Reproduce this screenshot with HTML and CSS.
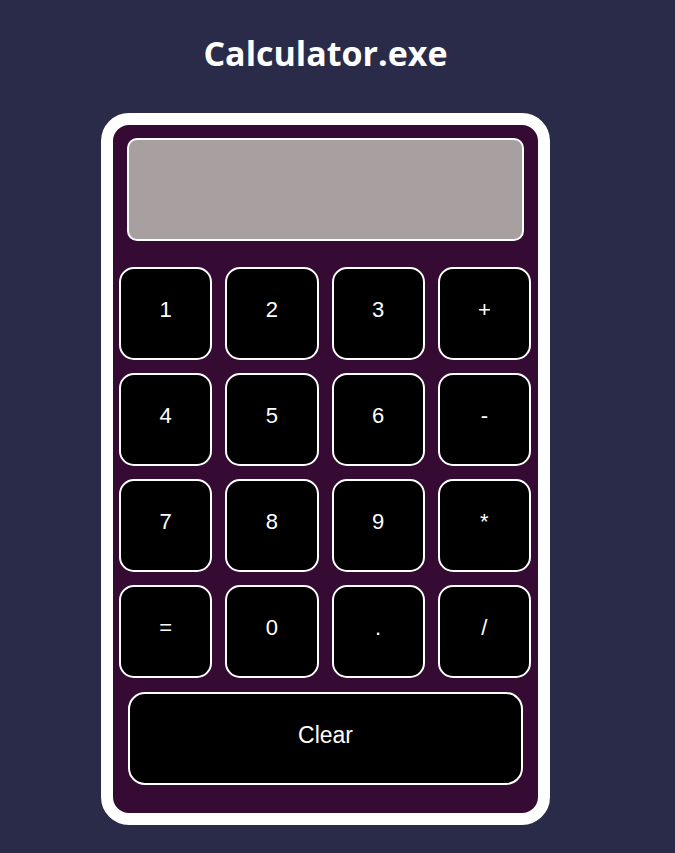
FILE: index.html
```html
<!DOCTYPE html>
<html lang="en">
<head>
<meta charset="utf-8">
<title>Calculator.exe</title>
<link rel="stylesheet" href="styles.css">
</head>
<body>
<div class="page">
  <h1 class="title">Calculator.exe</h1>
  <div class="calc">
    <div class="display"></div>
    <div class="keys">
      <button class="key">1</button>
      <button class="key">2</button>
      <button class="key">3</button>
      <button class="key">+</button>
      <button class="key">4</button>
      <button class="key">5</button>
      <button class="key">6</button>
      <button class="key">-</button>
      <button class="key">7</button>
      <button class="key">8</button>
      <button class="key">9</button>
      <button class="key">*</button>
      <button class="key">=</button>
      <button class="key">0</button>
      <button class="key">.</button>
      <button class="key">/</button>
    </div>
    <button class="key clear">Clear</button>
  </div>
</div>
</body>
</html>
```

FILE: styles.css
```css
html, body {
  margin: 0;
  padding: 0;
  background: #2a2b48;
}

.page {
  width: 651px;
  text-align: center;
}

.title {
  margin: 30px 0 37px;
  font-family: "Open Sans", "Noto Sans", sans-serif;
  font-weight: 700;
  font-size: 34px;
  line-height: 46px;
  color: #ffffff;
}

.calc {
  box-sizing: border-box;
  width: 449px;
  margin: 0 auto;
  border: 12px solid #ffffff;
  border-radius: 28px;
  background: #350a33;
  padding: 13px 0 28px;
  display: flex;
  flex-direction: column;
}

.display {
  box-sizing: border-box;
  width: 397px;
  height: 103px;
  margin-left: 14px;
  border: 2px solid #ffffff;
  border-radius: 10px;
  background: #a8a0a0;
}

.keys {
  width: 412px;
  margin: 26px 0 0 6px;
  display: grid;
  grid-template-columns: repeat(4, 1fr);
  grid-auto-rows: 93px;
  gap: 13px;
}

.key {
  box-sizing: border-box;
  margin: 0;
  padding: 0 0 8px;
  border: 2px solid #ffffff;
  border-radius: 15px;
  background: #000000;
  color: #ffffff;
  font-family: "Liberation Sans", Arial, sans-serif;
  font-size: 22px;
  display: flex;
  align-items: center;
  justify-content: center;
}

.clear {
  width: 395px;
  height: 93px;
  margin: 14px 0 0 15px;
  padding-bottom: 7px;
  border-radius: 17px;
  font-size: 23px;
}
```
